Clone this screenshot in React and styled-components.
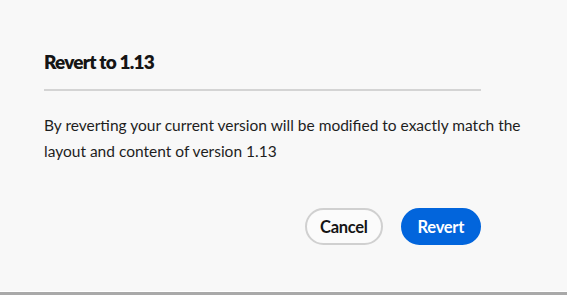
import React from 'react';
import styled, { createGlobalStyle } from 'styled-components';

const GlobalStyle = createGlobalStyle`
    html, body {
        margin: 0;
        padding: 0;
        background: #a9a9a9;
    }
    body {
        font-family: Lato, "Liberation Sans", sans-serif;
    }
`;

const Dialog = styled.div`
    box-sizing: border-box;
    width: 567px;
    height: 292px;
    background: #f8f8f8;
    border-bottom: 1px solid #ffffff;
    padding: 48px 86px 0 44px;
    display: flex;
    flex-direction: column;
`;

const Title = styled.h2`
    margin: 0;
    font-size: 19px;
    line-height: 28px;
    font-weight: 800;
    letter-spacing: -0.8px;
    color: #151515;
`;

const Divider = styled.hr`
    margin: 13px 0 0 0;
    border: none;
    height: 2px;
    background: #d4d4d4;
`;

const Body = styled.p`
    margin: 21px -48px 0 0;
    font-size: 15.5px;
    line-height: 26px;
    color: #1e1e1e;
`;

const Footer = styled.div`
    display: flex;
    justify-content: flex-end;
    gap: 18px;
    margin-top: 44px;
`;

const Button = styled.button`
    box-sizing: border-box;
    height: 37px;
    padding: 0 ${(p) => (p.primary ? '15px' : '13px')};
    border-radius: 19px;
    font-family: Lato, "Liberation Sans", sans-serif;
    font-size: 16.5px;
    font-weight: 700;
    letter-spacing: -0.3px;
    cursor: pointer;
    border: 2px solid ${(p) => (p.primary ? '#0265dc' : '#d0d0d0')};
    background: ${(p) => (p.primary ? '#0265dc' : '#fbfbfb')};
    color: ${(p) => (p.primary ? '#ffffff' : '#151515')};
`;

export default function App() {
    return (
        <>
            <GlobalStyle />
            <Dialog>
                <Title>Revert to 1.13</Title>
                <Divider />
                <Body>
                    By reverting your current version will be modified to exactly match
                    the layout and content of version 1.13
                </Body>
                <Footer>
                    <Button>Cancel</Button>
                    <Button primary>Revert</Button>
                </Footer>
            </Dialog>
        </>
    );
}
